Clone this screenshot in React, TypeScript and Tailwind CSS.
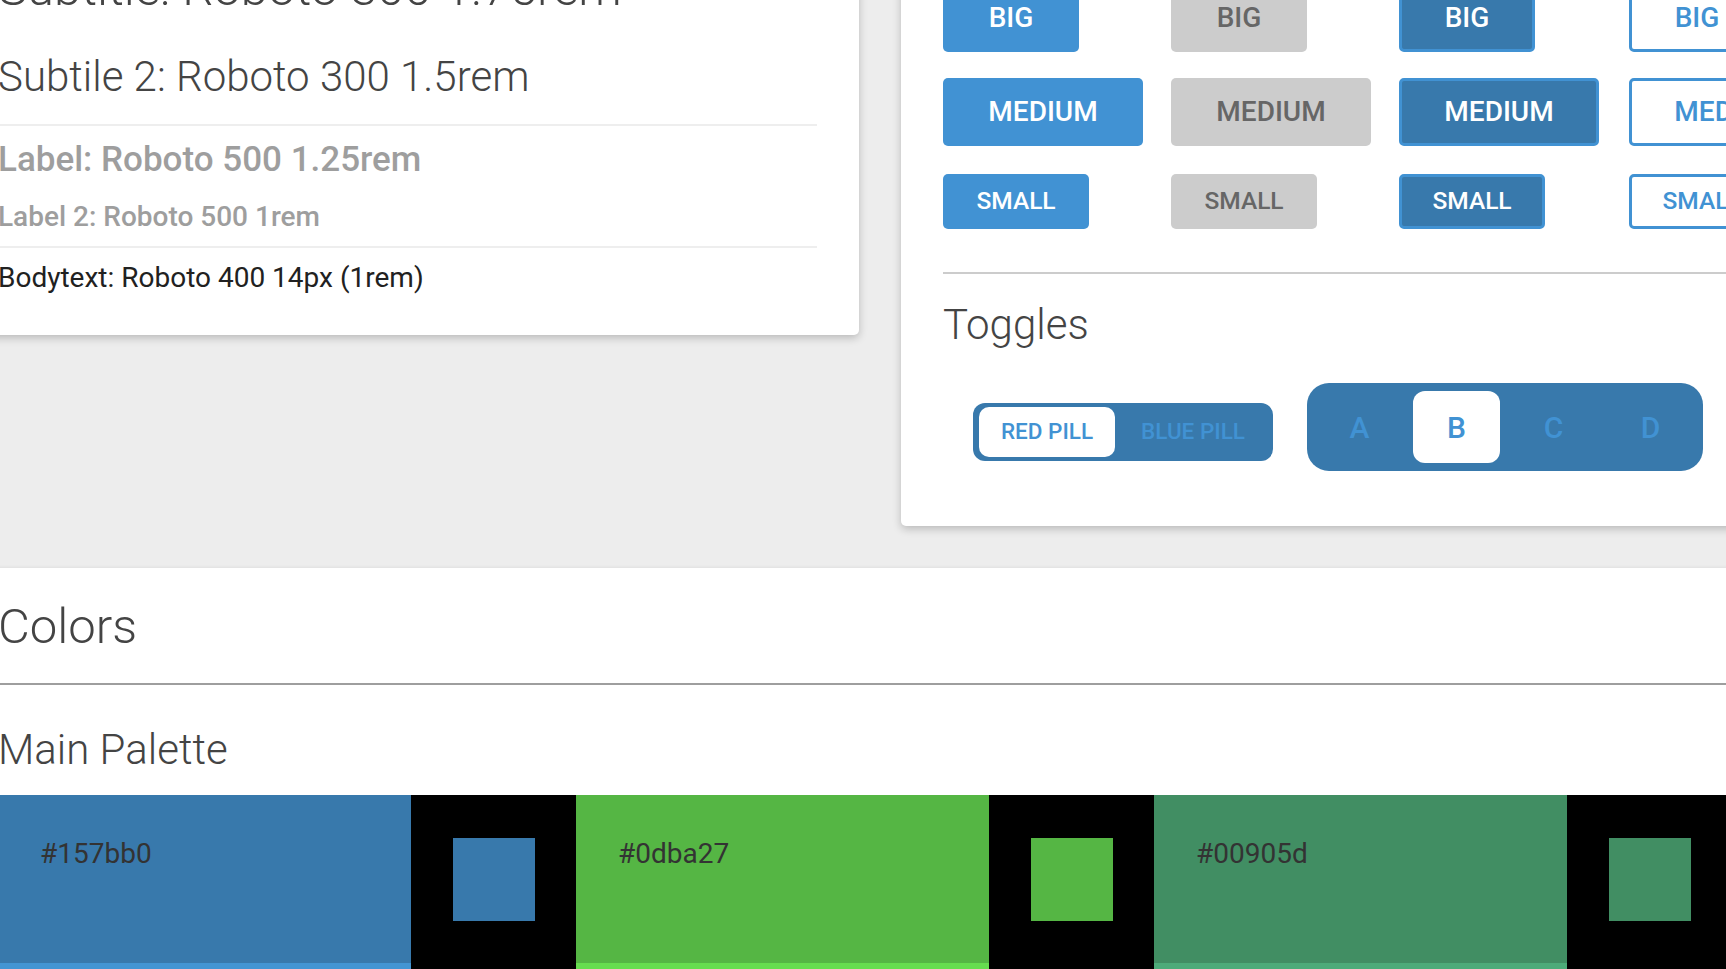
import React from "react";

const buttonSizes = [
  { label: "BIG", w: "w-[136px]", h: "h-[68px]", text: "text-[28px]", mt: "" },
  { label: "MEDIUM", w: "w-[200px]", h: "h-[68px]", text: "text-[28px]", mt: "mt-[26px]" },
  { label: "SMALL", w: "w-[146px]", h: "h-[55px]", text: "text-[24.5px]", mt: "mt-[28px]" },
];

const buttonStyles = [
  { col: "w-[228px]", cls: "bg-[#4192d3] text-white" },
  { col: "w-[228px]", cls: "bg-[#cccccc] text-[#666666]" },
  { col: "w-[230px]", cls: "bg-[#3879ac] border-[3px] border-[#4192d3] text-white" },
  { col: "w-[228px]", cls: "bg-white border-[3px] border-[#4192d3] text-[#4192d3]" },
];

const palette = [
  { main: "bg-[#3879ac]", light: "bg-[#4395d3]", hex: "#157bb0" },
  { main: "bg-[#55b644]", light: "bg-[#66dd4f]", hex: "#0dba27" },
  { main: "bg-[#418e63]", light: "bg-[#4dab79]", hex: "#00905d" },
];

const LeftCard = () => (
  <div className="w-[903px] shrink-0 bg-white rounded-[5px] shadow-[0_3px_8px_rgba(0,0,0,0.22)] px-[42px] pt-[37px] pb-[41px]">
    <p className="text-[49px] leading-[57px] font-light text-[#444444] whitespace-nowrap">
      Subtitle: Roboto 300 1.75rem
    </p>
    <p className="mt-[35px] text-[42px] leading-[49px] font-light text-[#444444] whitespace-nowrap">
      Subtile 2: Roboto 300 1.5rem
    </p>
    <div className="mt-[23px] h-[2px] bg-[#eeeeee]" />
    <p className="mt-[13px] text-[35px] leading-[41px] font-medium text-[#9e9e9e]">
      Label: Roboto 500 1.25rem
    </p>
    <p className="mt-[20px] text-[28px] leading-[33px] font-medium text-[#9e9e9e]">
      Label 2: Roboto 500 1rem
    </p>
    <div className="mt-[13px] h-[2px] bg-[#eeeeee]" />
    <p className="mt-[13px] text-[28px] leading-[33px] text-[#212121]">
      Bodytext: Roboto 400 14px (1rem)
    </p>
  </div>
);

const RightCard = () => (
  <div className="w-[1000px] shrink-0 bg-white rounded-[5px] shadow-[0_3px_8px_rgba(0,0,0,0.22)] pl-[42px] pt-[61px] pb-[55px]">
    {buttonSizes.map((size) => (
      <div key={size.label} className={`flex items-start ${size.mt}`}>
        {buttonStyles.map((style, idx) => (
          <div key={idx} className={`${style.col} shrink-0`}>
            <div
              className={`${size.w} ${size.h} ${size.text} ${style.cls} rounded-[5px] flex items-center justify-center font-medium`}
            >
              {size.label}
            </div>
          </div>
        ))}
      </div>
    ))}

    <div className="mt-[43px] h-[2px] bg-[#cccccc]" />

    <h3 className="mt-[26px] text-[42px] leading-[49px] font-light text-[#444444]">Toggles</h3>

    <div className="mt-[34px] ml-[30px] flex items-start">
      <div className="mt-[20px] flex items-center bg-[#3879ac] rounded-[12px] px-[6px] py-[4px]">
        <div className="h-[50px] w-[136px] bg-white rounded-[10px] flex items-center justify-center text-[22.5px] font-medium text-[#4192d3]">
          RED PILL
        </div>
        <div className="h-[50px] w-[152px] pl-[4px] flex items-center justify-center text-[22.5px] font-medium text-[#4192d3]">
          BLUE PILL
        </div>
      </div>

      <div className="ml-[34px] flex gap-[10px] bg-[#3879ac] rounded-[22px] px-[9px] py-[8px]">
        {["A", "B", "C", "D"].map((letter) => (
          <div
            key={letter}
            className={`w-[87px] h-[72px] rounded-[12px] flex items-center justify-center text-[30px] font-medium text-[#4192d3] ${
              letter === "B" ? "bg-white" : ""
            }`}
          >
            {letter}
          </div>
        ))}
      </div>
    </div>
  </div>
);

const Colors = () => (
  <div className="mt-[42px] bg-white shadow-[0_-1px_3px_rgba(0,0,0,0.06)] pt-[30px]">
    <h2 className="pl-[42px] text-[49px] leading-[57px] font-light text-[#444444]">Colors</h2>
    <div className="mt-[28px] h-[2px] bg-[#9e9e9e]" />
    <h3 className="mt-[40px] pl-[42px] text-[42px] leading-[49px] font-light text-[#444444]">
      Main Palette
    </h3>
    <div className="mt-[21px] ml-[42px]">
      <div className="flex">
        {palette.map((c) => (
          <div key={c.hex} className="flex shrink-0">
            <div className={`w-[413px] h-[168px] ${c.main} pl-[42px] pt-[42px] text-[28px] leading-[33px] text-[#333333]`}>
              {c.hex}
            </div>
            <div className="w-[165px] h-[168px] bg-black flex items-center justify-center">
              <div className={`w-[82px] h-[83px] ${c.main}`} />
            </div>
          </div>
        ))}
      </div>
      <div className="flex">
        {palette.map((c) => (
          <div key={c.hex} className="flex shrink-0">
            <div className={`w-[413px] h-[168px] ${c.light}`} />
            <div className="w-[165px] h-[168px] bg-black" />
          </div>
        ))}
      </div>
    </div>
  </div>
);

export default function App() {
  return (
    <div className="w-[1726px] h-[969px] overflow-hidden bg-[#ededed] font-['Roboto',sans-serif]">
      <div className="w-[1900px] -ml-[44px] -mt-[77px]">
        <div className="flex items-start gap-[42px]">
          <LeftCard />
          <RightCard />
        </div>
        <Colors />
      </div>
    </div>
  );
}
